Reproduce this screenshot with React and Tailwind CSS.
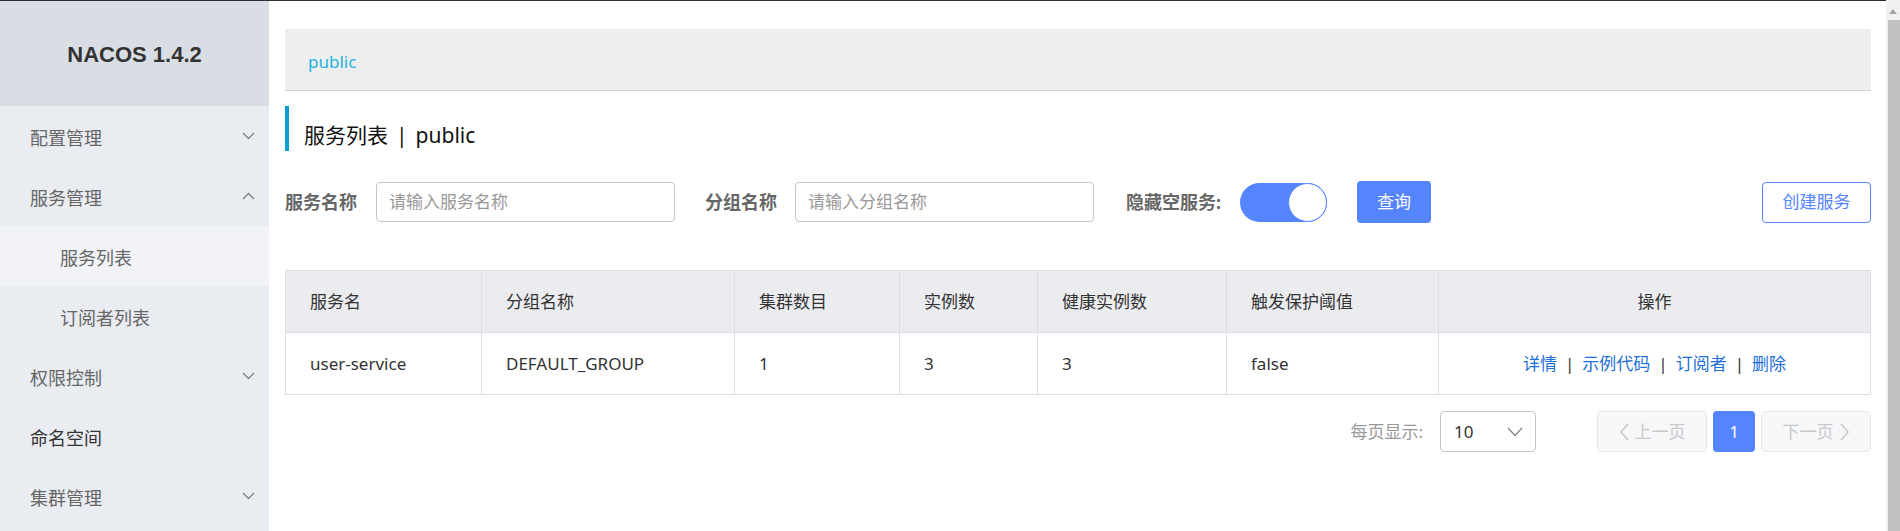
import React from "react";

const ChevDown = ({ className = "" }) => (
  <svg className={className} width="13" height="8" viewBox="0 0 13 8" fill="none">
    <polyline points="1,1 6.5,6.5 12,1" stroke="#7f7f7f" strokeWidth="1.3" />
  </svg>
);
const ChevUp = ({ className = "" }) => (
  <svg className={className} width="13" height="8" viewBox="0 0 13 8" fill="none">
    <polyline points="1,7 6.5,1.5 12,7" stroke="#7f7f7f" strokeWidth="1.3" />
  </svg>
);

const MenuItem = ({ label, dark, chevron, sub, active }) => (
  <div
    className={`flex h-[60px] items-center justify-between ${sub ? "pl-[60px]" : "pl-[30px]"} pr-[14px] ${
      active ? "bg-[#f1f3f7]" : ""
    }`}
  >
    <span className={`pt-[4px] text-[18px] ${dark ? "text-[#333]" : "text-[#666]"}`}>{label}</span>
    {chevron === "down" && <ChevDown />}
    {chevron === "up" && <ChevUp />}
  </div>
);

const cols = [
  { w: "w-[196px]", h: "服务名", v: "user-service" },
  { w: "w-[253px]", h: "分组名称", v: "DEFAULT_GROUP" },
  { w: "w-[165px]", h: "集群数目", v: "1" },
  { w: "w-[138px]", h: "实例数", v: "3" },
  { w: "w-[189px]", h: "健康实例数", v: "3" },
  { w: "w-[212px]", h: "触发保护阈值", v: "false" },
];

const Sep = () => <span className="mx-[8px] text-[#333]">|</span>;

export default function App() {
  return (
    <div className="flex h-[531px] w-[1900px] overflow-hidden bg-white font-['Noto_Sans','Noto_Sans_CJK_SC',sans-serif]">
      <div className="flex min-w-0 flex-1 flex-col">
        <div className="h-px bg-[#2b2e33]" />
        <div className="flex flex-1">
          {/* Sidebar */}
          <aside className="flex w-[269px] flex-col bg-[#e9ecf1]">
            <div className="flex h-[105px] items-center justify-center bg-[#d9dee4]">
              <span className="pt-[2px] font-['Liberation_Sans',sans-serif] text-[22px] font-bold text-[#333]">NACOS 1.4.2</span>
            </div>
            <MenuItem label="配置管理" chevron="down" />
            <MenuItem label="服务管理" chevron="up" />
            <MenuItem label="服务列表" sub active />
            <MenuItem label="订阅者列表" sub />
            <MenuItem label="权限控制" chevron="down" />
            <MenuItem label="命名空间" dark />
            <MenuItem label="集群管理" chevron="down" />
          </aside>

          {/* Main */}
          <main className="flex min-w-0 flex-1 flex-col pl-[16px] pr-[15px] pt-[28px]">
            <div className="flex h-[62px] items-center border-b border-[#d2d2d2] bg-[#eeeeee] pl-[23px]">
              <span className="pt-[4px] text-[17px] text-[#1eb2e0]">public</span>
            </div>

            <div className="mt-[15px] flex h-[45px] items-center border-l-[4px] border-[#0b9bd3] pl-[15px] pt-[14px]">
              <span className="text-[21px] text-[#111]">服务列表</span>
              <span className="mx-[8px] text-[21px] text-[#111]">|</span>
              <span className="text-[21px] text-[#111]">public</span>
            </div>

            <div className="mt-[30px] flex h-[42px] items-center">
              <span className="text-[18px] font-bold text-[#666]">服务名称</span>
              <div className="ml-[19px] flex h-[40px] w-[299px] items-center rounded-[4px] border border-[#c4c6cf] pl-[12px]">
                <span className="text-[17px] text-[#999]">请输入服务名称</span>
              </div>
              <span className="ml-[30px] text-[18px] font-bold text-[#666]">分组名称</span>
              <div className="ml-[18px] flex h-[40px] w-[299px] items-center rounded-[4px] border border-[#c4c6cf] pl-[12px]">
                <span className="text-[17px] text-[#999]">请输入分组名称</span>
              </div>
              <span className="ml-[32px] text-[18px] font-bold text-[#666]">隐藏空服务:</span>
              <div className="ml-[19px] flex h-[39px] w-[87px] items-center justify-end rounded-full bg-[#5584ff]">
                <div className="h-[39px] w-[39px] rounded-full border border-[#5584ff] bg-white" />
              </div>
              <div className="ml-[30px] flex h-[42px] w-[74px] items-center justify-center rounded-[4px] bg-[#5584ff]">
                <span className="text-[17px] text-white">查询</span>
              </div>
              <div className="flex-1" />
              <div className="flex h-[41px] w-[109px] items-center justify-center rounded-[4px] border border-[#5584ff] bg-white">
                <span className="text-[17px] text-[#5584ff]">创建服务</span>
              </div>
            </div>

            {/* Table */}
            <div className="mt-[47px] border border-[#dcdee3]">
              <div className="flex h-[62px] border-b border-[#dcdee3] bg-[#ebecf0]">
                {cols.map((c) => (
                  <div key={c.h} className={`${c.w} flex items-center border-r border-[#dcdee3] pl-[24px]`}>
                    <span className="text-[17px] text-[#333]">{c.h}</span>
                  </div>
                ))}
                <div className="flex flex-1 items-center justify-center">
                  <span className="text-[17px] text-[#333]">操作</span>
                </div>
              </div>
              <div className="flex h-[61px]">
                {cols.map((c) => (
                  <div key={c.h} className={`${c.w} flex items-center border-r border-[#dcdee3] pl-[24px]`}>
                    <span className="text-[17px] text-[#333]">{c.v}</span>
                  </div>
                ))}
                <div className="flex flex-1 items-center justify-center text-[17px] text-[#1e6fd9]">
                  <span>详情</span>
                  <Sep />
                  <span>示例代码</span>
                  <Sep />
                  <span>订阅者</span>
                  <Sep />
                  <span>删除</span>
                </div>
              </div>
            </div>

            {/* Pagination */}
            <div className="mt-[16px] flex h-[41px] items-center justify-end">
              <span className="text-[17px] text-[#999]">每页显示:</span>
              <div className="ml-[17px] flex h-[41px] w-[96px] items-center justify-between rounded-[4px] border border-[#c4c6cf] pl-[13px] pr-[12px]">
                <span className="text-[17px] text-[#333]">10</span>
                <svg width="16" height="10" viewBox="0 0 16 10" fill="none">
                  <polyline points="1,1 8,8.5 15,1" stroke="#888" strokeWidth="1.3" />
                </svg>
              </div>
              <div className="ml-[61px] flex h-[41px] w-[110px] items-center justify-center gap-[6px] rounded-[4px] border border-[#e6e7eb] bg-[#f7f8fa]">
                <svg width="10" height="18" viewBox="0 0 10 18" fill="none">
                  <polyline points="9,1 2,9 9,17" stroke="#c8c8c8" strokeWidth="1.6" />
                </svg>
                <span className="text-[17px] text-[#c8c8c8]">上一页</span>
              </div>
              <div className="ml-[6px] flex h-[41px] w-[42px] items-center justify-center rounded-[4px] bg-[#5584ff]">
                <span className="text-[17px] text-white">1</span>
              </div>
              <div className="ml-[6px] flex h-[41px] w-[110px] items-center justify-center gap-[6px] rounded-[4px] border border-[#e6e7eb] bg-[#f7f8fa]">
                <span className="text-[17px] text-[#c8c8c8]">下一页</span>
                <svg width="10" height="18" viewBox="0 0 10 18" fill="none">
                  <polyline points="1,1 8,9 1,17" stroke="#c8c8c8" strokeWidth="1.6" />
                </svg>
              </div>
            </div>
          </main>
        </div>
      </div>

      {/* Scrollbar */}
      <div className="flex w-[14px] flex-col bg-[#f1f1f1] pt-[3px]">
        <div className="flex h-[17px] items-center justify-center">
          <svg width="8" height="5" viewBox="0 0 8 5">
            <polygon points="0,5 4,0 8,5" fill="#a3a3a3" />
          </svg>
        </div>
        <div className="ml-[2px] flex-1 bg-[#c1c1c1]" />
      </div>
    </div>
  );
}
